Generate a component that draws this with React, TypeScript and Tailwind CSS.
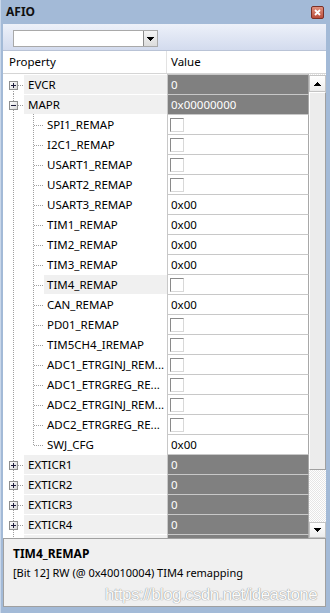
import React from "react";

type Row =
  | { kind: "group"; name: string; value: string; open?: boolean; first?: boolean }
  | { kind: "child"; name: string; value: string | null; last?: boolean; selected?: boolean };

const rows: Row[] = [
  { kind: "group", name: "EVCR", value: "0", first: true },
  { kind: "group", name: "MAPR", value: "0x00000000", open: true },
  { kind: "child", name: "SPI1_REMAP", value: null },
  { kind: "child", name: "I2C1_REMAP", value: null },
  { kind: "child", name: "USART1_REMAP", value: null },
  { kind: "child", name: "USART2_REMAP", value: null },
  { kind: "child", name: "USART3_REMAP", value: "0x00" },
  { kind: "child", name: "TIM1_REMAP", value: "0x00" },
  { kind: "child", name: "TIM2_REMAP", value: "0x00" },
  { kind: "child", name: "TIM3_REMAP", value: "0x00" },
  { kind: "child", name: "TIM4_REMAP", value: null, selected: true },
  { kind: "child", name: "CAN_REMAP", value: "0x00" },
  { kind: "child", name: "PD01_REMAP", value: null },
  { kind: "child", name: "TIM5CH4_IREMAP", value: null },
  { kind: "child", name: "ADC1_ETRGINJ_REM...", value: null },
  { kind: "child", name: "ADC1_ETRGREG_RE...", value: null },
  { kind: "child", name: "ADC2_ETRGINJ_REM...", value: null },
  { kind: "child", name: "ADC2_ETRGREG_RE...", value: null },
  { kind: "child", name: "SWJ_CFG", value: "0x00", last: true },
  { kind: "group", name: "EXTICR1", value: "0" },
  { kind: "group", name: "EXTICR2", value: "0" },
  { kind: "group", name: "EXTICR3", value: "0" },
  { kind: "group", name: "EXTICR4", value: "0" },
  { kind: "group", name: "", value: "" },
];

const DOT = "#a0a0a0";

function Gutter1({ box, open, first }: { box: boolean; open?: boolean; first?: boolean }) {
  return (
    <svg width="21" height="20" className="shrink-0 block" shapeRendering="crispEdges">
      <defs>
        <linearGradient id="bx" x1="0" y1="0" x2="1" y2="1">
          <stop offset="0" stopColor="#ffffff" />
          <stop offset="1" stopColor="#d8d8d8" />
        </linearGradient>
      </defs>
      <line x1="10.5" y1={first ? 11 : 0} x2="10.5" y2="20" stroke={DOT} strokeDasharray="1 1" />
      {box && (
        <>
          <line x1="15" y1="11.5" x2="21" y2="11.5" stroke={DOT} strokeDasharray="1 1" />
          <rect x="6.5" y="7.5" width="8" height="8" fill="url(#bx)" stroke="#8e8f8f" />
          <line x1="8" y1="11.5" x2="13" y2="11.5" stroke="#1b1b3a" />
          {!open && <line x1="10.5" y1="9" x2="10.5" y2="14" stroke="#1b1b3a" />}
        </>
      )}
    </svg>
  );
}

function Gutter2({ last }: { last?: boolean }) {
  return (
    <svg width="20" height="20" className="shrink-0 block" shapeRendering="crispEdges">
      <line x1="9.5" y1="0" x2="9.5" y2={last ? 12 : 20} stroke={DOT} strokeDasharray="1 1" />
      <line x1="10" y1="11.5" x2="22" y2="11.5" stroke={DOT} strokeDasharray="1 1" />
    </svg>
  );
}

function CheckBox() {
  return (
    <div className="w-[14px] h-[14px] bg-white border-t border-l border-t-[#8a8a8a] border-l-[#8a8a8a] border-r border-b border-r-[#d8d8d8] border-b-[#d8d8d8]" />
  );
}

function GridRow({ row }: { row: Row }) {
  if (row.kind === "group") {
    return (
      <div className="flex h-[20px] shrink-0">
        <Gutter1 box open={row.open} first={row.first} />
        <div className="w-[143px] border-t border-white bg-[#f0f0f0] pl-[4px] flex items-center whitespace-nowrap overflow-hidden">
          {row.name}
        </div>
        <div className="w-[142px] border-t border-t-[#c8c8c8] border-l border-l-[#c8c8c8] border-r border-r-[#a8a8a8] bg-[#808080] text-white pl-[3px] flex items-center">
          {row.value}
        </div>
      </div>
    );
  }
  return (
    <div className="flex h-[20px] shrink-0">
      <Gutter1 box={false} />
      <Gutter2 last={row.last} />
      <div
        className={
          "w-[123px] border-t border-white pl-[3px] flex items-center whitespace-nowrap overflow-hidden " +
          (row.selected ? "bg-[#f0f0f0]" : "bg-white")
        }
      >
        {row.name}
      </div>
      <div className="w-[142px] border-t border-t-[#c8c8c8] border-l border-l-[#c8c8c8] border-r border-r-[#a8a8a8] bg-white pl-[2px] flex items-center">
        {row.value === null ? <CheckBox /> : <span className="pl-[1px]">{row.value}</span>}
      </div>
    </div>
  );
}

function Arrow({ up }: { up?: boolean }) {
  return (
    <svg width="7" height="4" viewBox="0 0 7 4" shapeRendering="crispEdges">
      {up ? <polygon points="3.5,0 7,4 0,4" fill="#000" /> : <polygon points="0,0 7,0 3.5,4" fill="#000" />}
    </svg>
  );
}

export default function App() {
  return (
    <div
      className="w-[330px] h-[613px] bg-[#a3bad7] flex flex-col overflow-hidden text-[11.5px] text-black border-l border-[#c9d7ea]"
      style={{ fontFamily: '"Noto Sans", "DejaVu Sans", sans-serif' }}
    >
      {/* title bar */}
      <div className="h-[24px] shrink-0 flex items-center justify-between pl-[5px] pr-[6px]">
        <span className="font-bold text-[12px] text-[#111]">AFIO</span>
        <div className="w-[13px] h-[13px] rounded-[2px] border border-[#7a3026] bg-gradient-to-b from-[#e0917f] to-[#b94c3a] flex items-center justify-center">
          <svg width="7" height="7" viewBox="0 0 7 7">
            <path d="M1 1 L6 6 M6 1 L1 6" stroke="#fff" strokeWidth="1.8" />
          </svg>
        </div>
      </div>

      <div className="flex-1 flex flex-col ml-[2px] mr-[4px] mb-[6px] min-h-0">
        {/* toolbar */}
        <div className="h-[27px] shrink-0 bg-gradient-to-b from-[#edf1f9] to-[#d3dbee] pt-[6px] pl-[10px] border-b border-[#b9c3d6]">
          <div className="w-[145px] h-[17px] bg-white border border-[#a9a9a9] flex justify-end">
            <div className="w-[14px] h-full bg-gradient-to-b from-[#f4f4f4] to-[#dcdcdc] border-l border-[#8c8c8c] flex items-center justify-center">
              <Arrow />
            </div>
          </div>
        </div>

        {/* header */}
        <div className="h-[23px] shrink-0 bg-white flex border-b border-[#d5d5d5] text-[11.5px]">
          <div className="w-[164px] pl-[6px] flex items-center border-r border-[#e3e3e3]">Property</div>
          <div className="pl-[4px] flex items-center">Value</div>
        </div>

        {/* grid */}
        <div className="h-[464px] shrink-0 flex bg-white overflow-hidden">
          <div className="w-[306px] flex flex-col">
            {rows.map((r, i) => (
              <GridRow key={i} row={r} />
            ))}
          </div>
          <div className="w-[17px] flex flex-col pt-[1px] bg-[repeating-conic-gradient(#e6e6e6_0%_25%,#ffffff_0%_50%)] bg-[length:2px_2px]">
            <div className="h-[17px] shrink-0 bg-gradient-to-b from-white to-[#ececec] border border-[#c4c4c4] flex items-center justify-center">
              <Arrow up />
            </div>
            <div className="h-[378px] shrink-0 bg-[#ececec] border-l border-t border-white border-r border-b border-r-[#a0a0a0] border-b-[#a0a0a0]" />
            <div className="flex-1" />
            <div className="h-[16px] shrink-0 bg-gradient-to-b from-white to-[#ececec] border border-[#c4c4c4] flex items-center justify-center">
              <Arrow />
            </div>
          </div>
        </div>

        {/* description */}
        <div className="flex-1 bg-[#f0f0f0] border border-[#a0a0a0] pl-[9px] pt-[6px] relative">
          <div className="font-bold text-[12px] leading-[18px]">TIM4_REMAP</div>
          <div className="text-[11px] leading-[20px]">[Bit 12] RW (@ 0x40010004) TIM4 remapping</div>
          <div
            className="absolute right-[8px] bottom-[0px] whitespace-nowrap text-[17px] leading-[22px] tracking-[-0.6px] text-[#fbfbfb] [text-shadow:0_0_1px_#8a8a8a,0_0_1px_#a0a0a0]"
            style={{ fontFamily: '"Liberation Sans", sans-serif' }}
          >
            https://blog.csdn.net/ideastone
          </div>
        </div>
      </div>
    </div>
  );
}
